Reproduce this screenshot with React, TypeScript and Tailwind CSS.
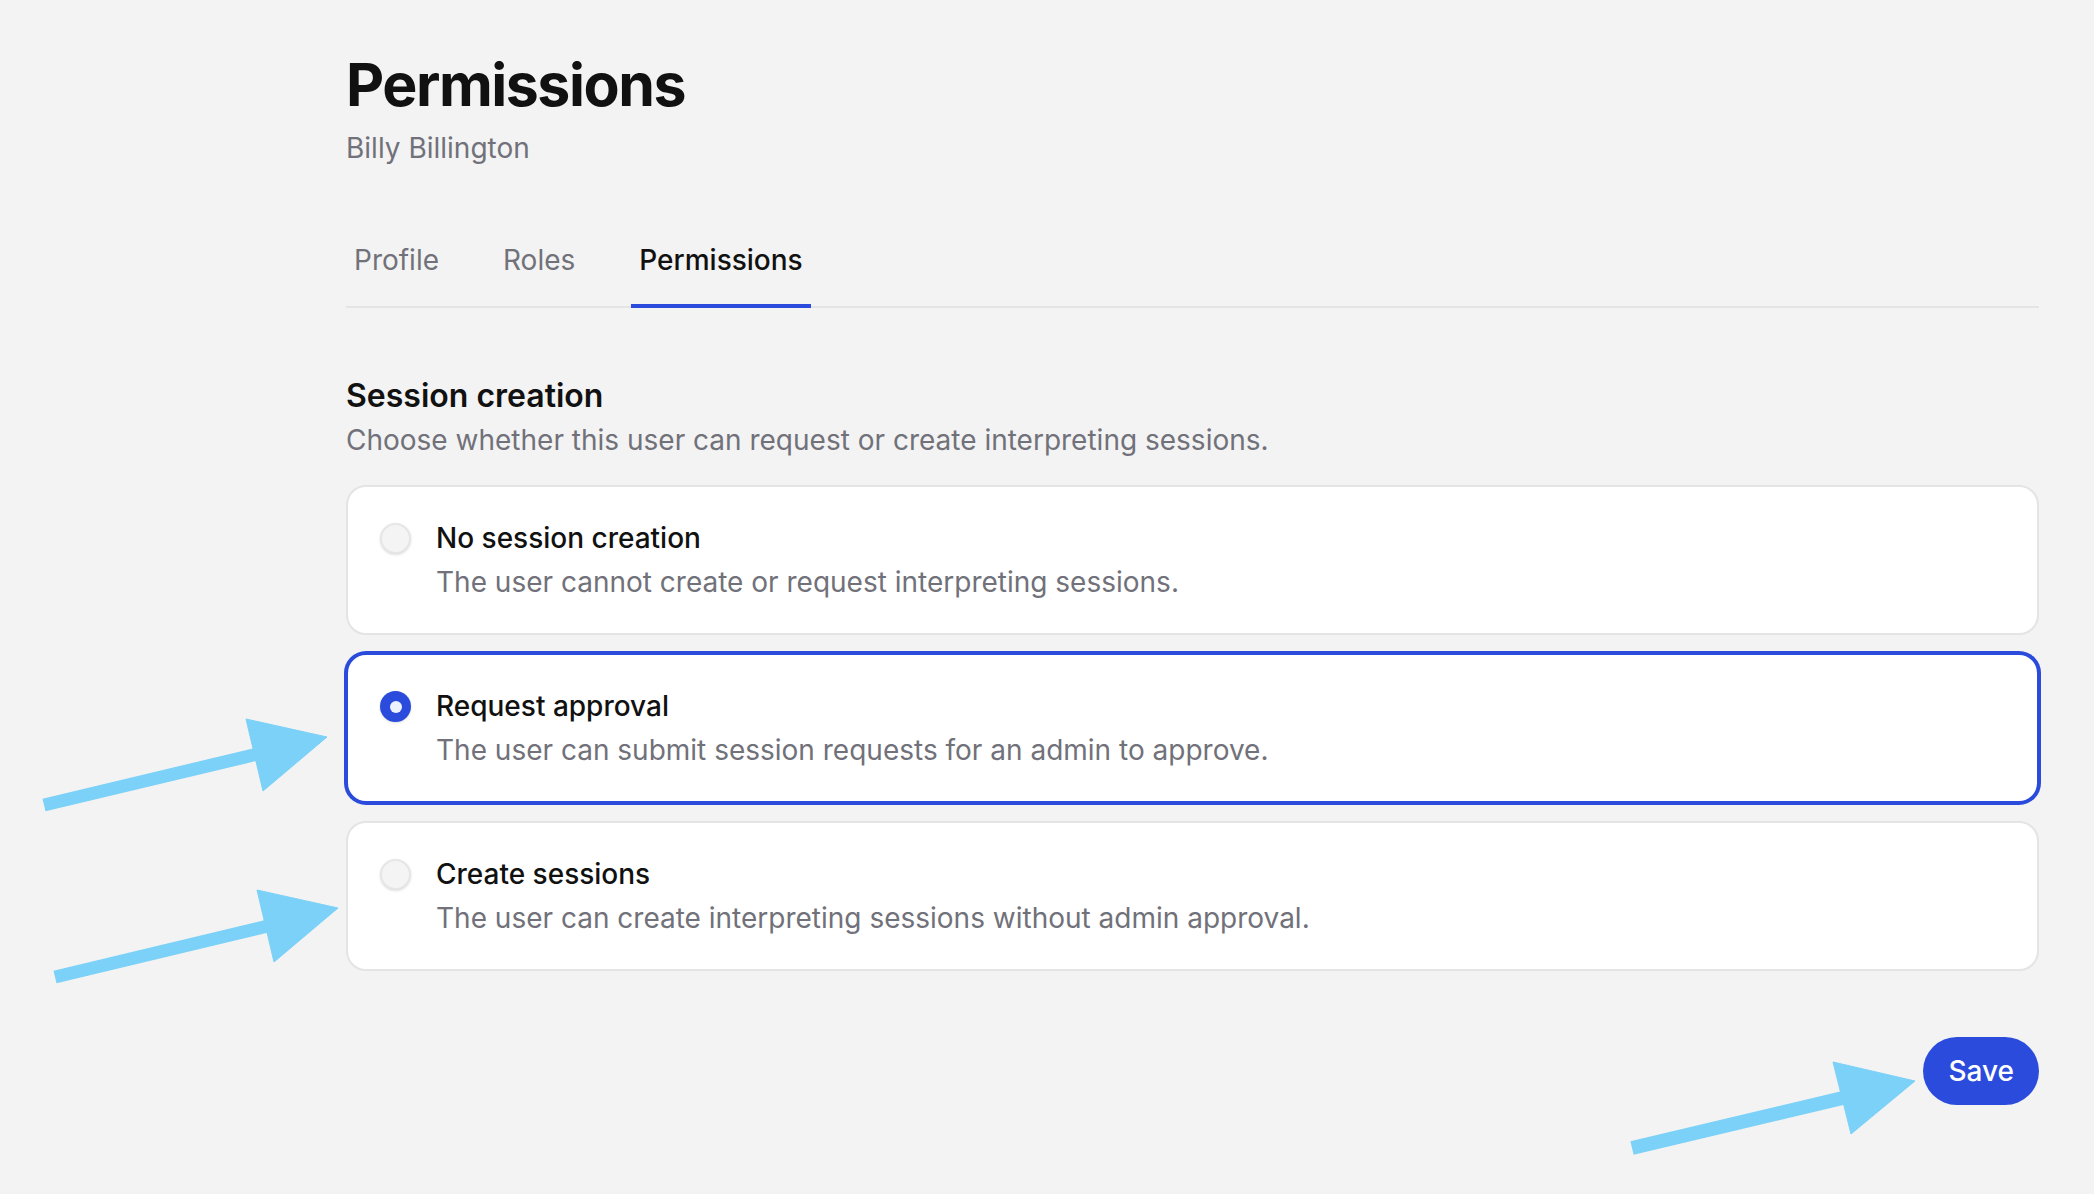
import React, { useState } from 'react';

const options = [
  { id: 'none', title: 'No session creation', desc: 'The user cannot create or request interpreting sessions.' },
  { id: 'request', title: 'Request approval', desc: 'The user can submit session requests for an admin to approve.' },
  { id: 'create', title: 'Create sessions', desc: 'The user can create interpreting sessions without admin approval.' },
];

const tabs = ['Profile', 'Roles', 'Permissions'];

function Arrows() {
  // annotation arrows drawn over the page
  return (
    <svg className="pointer-events-none absolute inset-0" width="2094" height="1194" viewBox="0 0 2094 1194">
      <g fill="#7bd1f7" stroke="#7bd1f7">
        <line x1="44" y1="805" x2="262" y2="753" strokeWidth="13" />
        <polygon points="246,719 327,737 263,791" strokeWidth="1" />
        <line x1="55" y1="977" x2="272" y2="925" strokeWidth="13" />
        <polygon points="257,890 338,908 274,962" strokeWidth="1" />
        <line x1="1632" y1="1148" x2="1847" y2="1097" strokeWidth="14" />
        <polygon points="1833,1062 1915,1081 1851,1134" strokeWidth="1" />
      </g>
    </svg>
  );
}

export default function App() {
  const [selected, setSelected] = useState('request');

  return (
    <div className="relative min-h-[1194px] w-full bg-[#f3f3f3] font-['Inter',sans-serif] antialiased">
      <div className="ml-[346px] w-[1693px] pt-[55px]">
        <h1 className="text-[59px] leading-none font-bold tracking-tight text-[#111111]">Permissions</h1>
        <p className="mt-[14px] text-[28px] leading-[40px] text-[#71717a]">Billy Billington</p>

        <nav className="mt-[72px] flex gap-12 border-b-2 border-[#e4e4e4]">
          {tabs.map((t) => {
            const active = t === 'Permissions';
            return (
              <button
                key={t}
                className={
                  active
                    ? '-mb-[2px] border-b-4 border-[#2a4bdc] px-2 pb-6 text-[28px] leading-[40px] font-medium text-[#111111]'
                    : '-mb-[2px] border-b-4 border-transparent px-2 pb-6 text-[28px] leading-[40px] text-[#71717a]'
                }
              >
                {t}
              </button>
            );
          })}
        </nav>

        <h2 className="mt-[68px] text-[32px] leading-[40px] font-semibold text-[#111111]">Session creation</h2>
        <p className="mt-1 text-[28px] leading-[40px] text-[#71717a]">
          Choose whether this user can request or create interpreting sessions.
        </p>

        <div className="mt-[25px] flex flex-col gap-[18px]">
          {options.map((o) => {
            const active = o.id === selected;
            return (
              <label
                key={o.id}
                onClick={() => setSelected(o.id)}
                className={
                  active
                    ? 'flex cursor-pointer items-start gap-[25px] rounded-[20px] border-2 border-[#2a4bdc] bg-white px-[32px] py-[31px] ring-2 ring-[#2a4bdc]'
                    : 'flex cursor-pointer items-start gap-[25px] rounded-[20px] border-2 border-[#e4e4e4] bg-white px-[32px] py-[31px]'
                }
              >
                <span
                  className={
                    active
                      ? 'mt-[5px] flex h-[31px] w-[31px] shrink-0 items-center justify-center rounded-full bg-[#2a4bdc] shadow-sm'
                      : 'mt-[5px] flex h-[31px] w-[31px] shrink-0 items-center justify-center rounded-full border-2 border-[#e6e6e8] bg-[#f4f4f5] shadow-sm'
                  }
                >
                  {active && <span className="h-[12px] w-[12px] rounded-full bg-[#eef2ff]" />}
                </span>
                <span className="flex flex-col gap-1">
                  <span className="text-[28px] leading-[40px] font-medium text-[#111111]">{o.title}</span>
                  <span className="text-[28px] leading-[40px] text-[#71717a]">{o.desc}</span>
                </span>
              </label>
            );
          })}
        </div>

        <div className="mt-[66px] flex justify-end">
          <button className="h-[68px] rounded-full bg-[#2a4bdc] px-[25px] text-[28px] font-medium text-white">Save</button>
        </div>
      </div>
      <Arrows />
    </div>
  );
}
